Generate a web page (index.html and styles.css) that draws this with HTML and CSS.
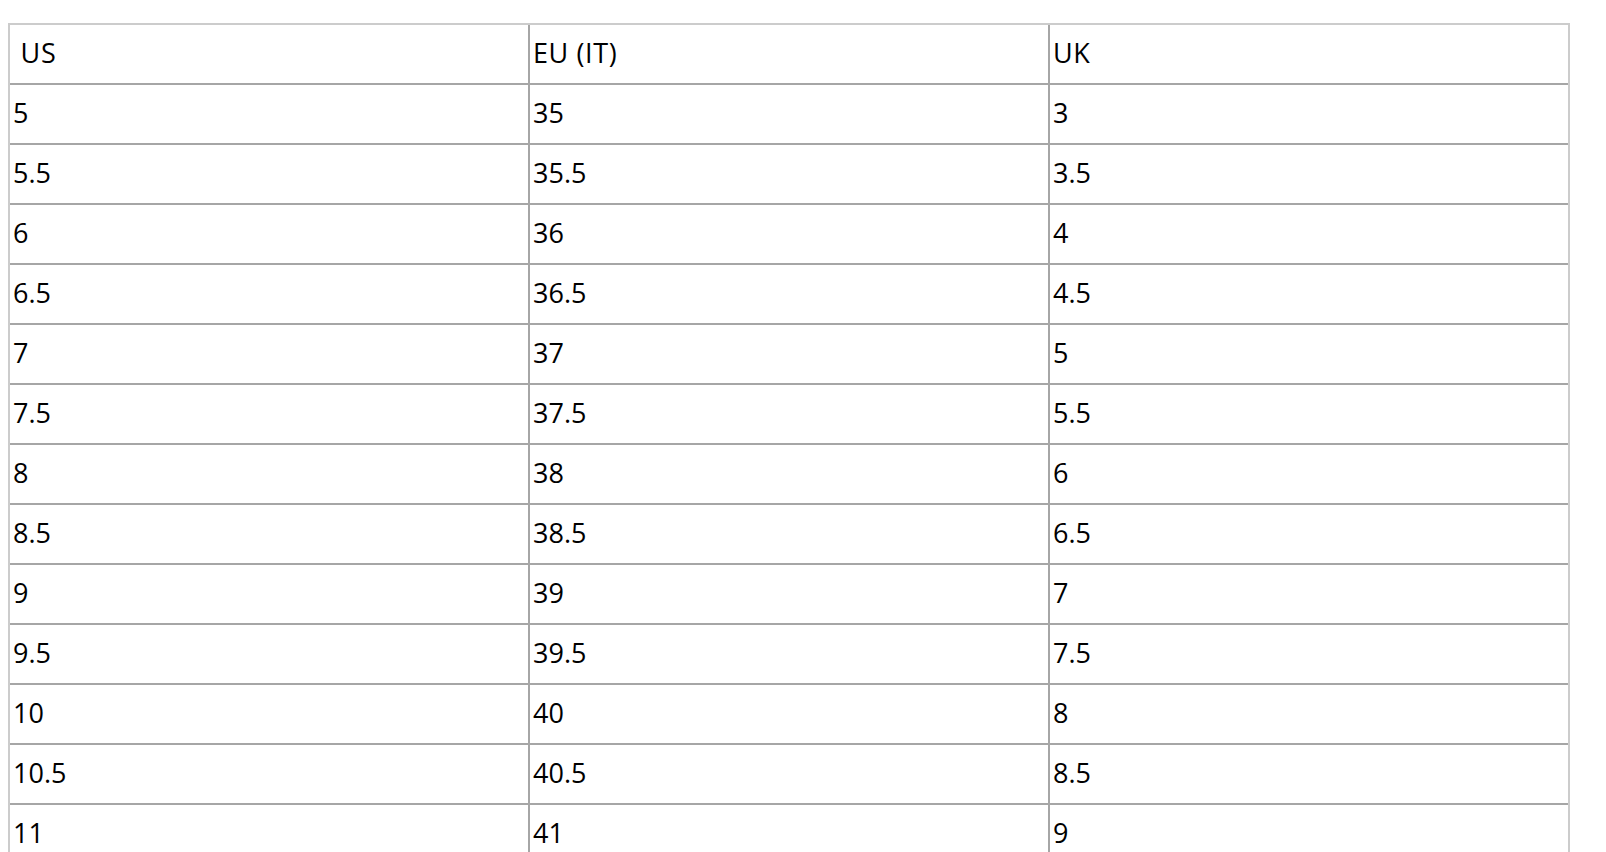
FILE: index.html
```html
<!DOCTYPE html>
<html lang="en">
<head>
<meta charset="utf-8">
<title>Size chart</title>
<link rel="stylesheet" href="styles.css">
</head>
<body>
<div class="wrap">
<table class="sizes">
<colgroup>
<col class="c1"><col class="c2"><col class="c3">
</colgroup>
<thead>
<tr><th>&nbsp;US</th><th>EU (IT)</th><th>UK</th></tr>
</thead>
<tbody>
<tr><td>5</td><td>35</td><td>3</td></tr>
<tr><td>5.5</td><td>35.5</td><td>3.5</td></tr>
<tr><td>6</td><td>36</td><td>4</td></tr>
<tr><td>6.5</td><td>36.5</td><td>4.5</td></tr>
<tr><td>7</td><td>37</td><td>5</td></tr>
<tr><td>7.5</td><td>37.5</td><td>5.5</td></tr>
<tr><td>8</td><td>38</td><td>6</td></tr>
<tr><td>8.5</td><td>38.5</td><td>6.5</td></tr>
<tr><td>9</td><td>39</td><td>7</td></tr>
<tr><td>9.5</td><td>39.5</td><td>7.5</td></tr>
<tr><td>10</td><td>40</td><td>8</td></tr>
<tr><td>10.5</td><td>40.5</td><td>8.5</td></tr>
<tr><td>11</td><td>41</td><td>9</td></tr>
</tbody>
</table>
</div>
</body>
</html>
```
FILE: styles.css
```css
html, body {
  background: #ffffff;
}
body {
  margin: 8px;
  font-family: "Open Sans", "Liberation Sans", sans-serif;
  color: #000000;
}
.wrap {
  padding-top: 15px;
}
.sizes {
  width: 1562px;
  border-collapse: separate;
  border-spacing: 0;
  border: 2px solid #cccccc;
  table-layout: fixed;
}
.c1, .c2 {
  width: 520px;
}
.c3 {
  width: 518px;
}
.sizes th,
.sizes td {
  text-align: left;
  font-weight: 400;
  font-size: 27px;
  line-height: 36px;
  padding: 10px 3px 12px;
  border-right: 2px solid #a6a6a6;
  border-bottom: 2px solid #a6a6a6;
  vertical-align: middle;
  white-space: nowrap;
}
.sizes th {
  letter-spacing: 0.6px;
}
.sizes th:last-child,
.sizes td:last-child {
  border-right: 0;
}
.sizes tbody tr:last-child td {
  border-bottom: 0;
}
```
